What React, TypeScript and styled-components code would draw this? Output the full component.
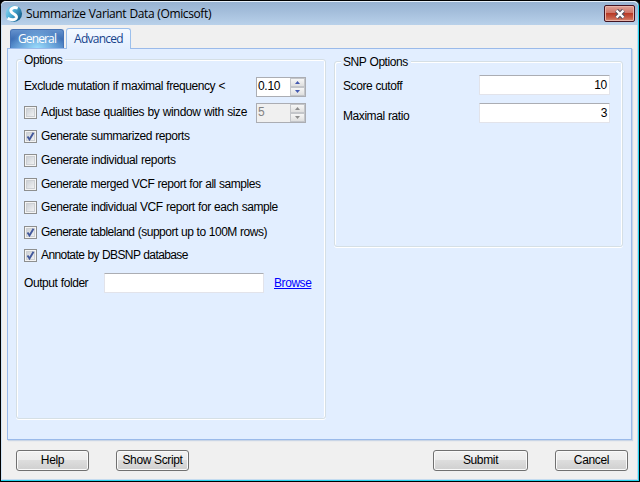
import React from "react";
import styled, { createGlobalStyle } from "styled-components";

const Global = createGlobalStyle`
  * { box-sizing: border-box; }
  body { margin: 0; background: #000; overflow: hidden; }
`;

const Window = styled.div`
  width: 640px;
  height: 482px;
  display: flex;
  flex-direction: column;
  border: 1px solid #000;
  border-radius: 6px 6px 0 0;
  background: #f0f0f0;
  box-shadow: inset -1px -1px 0 #27d3ee, inset 1px 0 0 #cfe4f7, inset -2px -2px 0 #c5dcf0;
  font: 12px/14px "Liberation Sans", Arial, sans-serif;
  letter-spacing: -0.43px;
  word-spacing: 0.4px;
  color: #000;
  white-space: nowrap;
`;

const TitleBar = styled.header`
  height: 24px;
  flex: none;
  display: flex;
  align-items: center;
  padding: 0 3px 0 4px;
  margin-right: 1px;
  border-radius: 5px 5px 0 0;
  border-top: 1px solid #e6f0fa;
  background: linear-gradient(#98b3d2, #a5bfdc 45%, #b9d1ea);
`;

const Title = styled.h1`
  margin: 0 auto 0 3px;
  font: 12px/18px "Open Sans", "Noto Sans", sans-serif;
  letter-spacing: -0.38px;
  word-spacing: 0.4px;
`;

const CloseButton = styled.button`
  width: 31px;
  height: 17px;
  padding: 0;
  display: flex;
  align-items: center;
  justify-content: center;
  border: 1px solid #431422;
  border-radius: 2px;
  box-shadow: inset 0 0 0 1px #e9b4a9;
  background: linear-gradient(#dfa298, #cf7567 46%, #b83a26 50%, #c8604b 80%, #d98a72);
`;

const Tabs = styled.nav`
  height: 23px;
  flex: none;
  display: flex;
  align-items: flex-end;
  gap: 2px;
  padding-left: 9px;
`;

const Tab = styled.div<{ $active?: boolean }>`
  width: ${(p) => (p.$active ? 65 : 54)}px;
  height: ${(p) => (p.$active ? 21 : 19)}px;
  margin-bottom: ${(p) => (p.$active ? -1 : 0)}px;
  padding-top: ${(p) => (p.$active ? 1 : 0)}px;
  position: relative;
  text-align: center;
  font: 12px/18px "Open Sans", "Noto Sans", sans-serif;
  letter-spacing: ${(p) => (p.$active ? -0.75 : -0.85)}px;
  border: 1px solid ${(p) => (p.$active ? "#9bbfec" : "#4673b5")};
  border-bottom: 0;
  border-radius: 3px 3px 0 0;
  color: ${(p) => (p.$active ? "#15428b" : "#fff")};
  background: ${(p) =>
    p.$active
      ? "linear-gradient(#f5faff, #e2eeff)"
      : "radial-gradient(ellipse at 50% 100%, #9adcfb 0, rgba(130,190,235,.6) 45%, transparent 75%), linear-gradient(#6391cd, #3e70b6 50%, #5189ca)"};
`;

const Panel = styled.main`
  width: 625px;
  height: 392px;
  flex: none;
  margin-left: 6px;
  display: flex;
  align-items: flex-start;
  gap: 8px;
  padding: 10px 0 0 8px;
  border: 1px solid #9abaea;
  background: #e2eeff;
  box-shadow: 1px 1px 1px #c9d5e6;
`;

const Group = styled.section<{ $w: number; $h: number; $top?: number; $inset?: number }>`
  width: ${(p) => p.$w}px;
  height: ${(p) => p.$h}px;
  margin-top: ${(p) => p.$top ?? 0}px;
  padding-left: ${(p) => p.$inset ?? 7}px;
  display: flex;
  flex-direction: column;
  align-items: flex-start;
  border: 1px solid #d5dfe5;
  border-radius: 3px;
  box-shadow: inset 1px 1px 0 #fff, inset -1px 0 0 #fff, 0 1px 0 #fff;
`;

const Legend = styled.h2`
  margin: -7px 0 0 -2px;
  height: 14px;
  padding: 0 3px 0 2px;
  background: #e2eeff;
  font: inherit;
`;

const Row = styled.div<{ $gap: number; $h?: number }>`
  height: ${(p) => p.$h ?? 20}px;
  margin-top: ${(p) => p.$gap}px;
  display: flex;
  align-items: center;
`;

const Caption = styled.span<{ $w: number; $drop?: number }>`
  width: ${(p) => p.$w}px;
  margin-top: ${(p) => p.$drop ?? 0}px;
`;

const CheckRow = styled.label<{ $gap: number }>`
  height: 13px;
  margin-top: ${(p) => p.$gap}px;
  display: flex;
  align-items: center;
`;

const Box = styled.span`
  width: 13px;
  height: 13px;
  display: flex;
  border: 1px solid #8e8f8f;
  background: linear-gradient(135deg, #c3c8cf, #fafafa);
  background-clip: content-box;
  padding: 2px;
  box-shadow: inset 0 0 0 1px #f4f4f4, inset 0 0 0 2px #cdd0d4;
`;

const CheckMark = styled.svg`
  width: 9px;
  height: 9px;
  margin: -1px;
  overflow: visible;
  flex: none;
`;

const CheckText = styled.span<{ $w?: number; $track?: number }>`
  margin: -2px 0 0 4px;
  width: ${(p) => (p.$w ? p.$w + "px" : "auto")};
  letter-spacing: ${(p) => (p.$track === undefined ? "inherit" : p.$track + "px")};
`;

const Field = styled.div<{ $w: number }>`
  width: ${(p) => p.$w}px;
  height: 20px;
  padding: 2px 2px 0;
  text-align: right;
  font-size: 12px;
  letter-spacing: -0.3px;
  border: 1px solid #e2e3ea;
  border-top-color: #abadb3;
  border-radius: 1px;
  background: #fff;
`;

const SpinField = styled.div<{ $off?: boolean }>`
  width: 50px;
  height: 20px;
  display: flex;
  justify-content: space-between;
  padding-left: 1px;
  font-size: 12px;
  line-height: 17px;
  letter-spacing: -0.3px;
  border: 1px solid #abadb3;
  background: ${(p) => (p.$off ? "#f0f0f0" : "#fff")};
  color: ${(p) => (p.$off ? "#838383" : "#000")};
`;

const Steps = styled.div`
  width: 15px;
  height: 18px;
  display: flex;
  flex-direction: column;
`;

const Step = styled.span`
  height: 9px;
  display: flex;
  align-items: center;
  justify-content: center;
  border: 1px solid #c4c6ca;
  background: linear-gradient(#f6f6f6, #dfdfdf);
`;

const Link = styled.a`
  margin-left: 10px;
  color: #00f;
  text-decoration: underline;
`;

const Footer = styled.footer`
  display: flex;
  padding: 10px 11px 0 15px;
`;

const Button = styled.button<{ $w: number; $left?: number }>`
  width: ${(p) => p.$w}px;
  height: 21px;
  margin-left: ${(p) => p.$left ?? 0}px;
  padding: 0 0 2px;
  flex: none;
  font: inherit;
  letter-spacing: -0.35px;
  color: #000;
  border: 1px solid #707070;
  border-radius: 3px;
  box-shadow: inset 0 0 0 1px #fafafa;
  background: linear-gradient(#f2f2f2, #ebebeb 49%, #dddddd 50%, #cfcfcf);
`;

const Logo = () => (
  <svg width="18" height="18" viewBox="0 0 17 17">
    <defs>
      <linearGradient id="logo" x1="0" y1="0" x2="1" y2="0.6">
        <stop offset="0" stopColor="#9bd9f2" />
        <stop offset="0.5" stopColor="#4baed6" />
        <stop offset="1" stopColor="#17618f" />
      </linearGradient>
    </defs>
    <circle cx="8.3" cy="8.2" r="7.800" fill="url(#logo)" />
    <path d="M12 3C8 1.500 4.500 3.500 5.800 6.300C7 8.800 11.300 8.800 10.800 11.800C10.300 14.300 6 14.500 2.500 12.500" fill="none" stroke="#fff" strokeWidth="2.800" />
  </svg>
);

const Arrow = ({ down, off }: { down?: boolean; off?: boolean }) => (
  <svg width="5" height="3" viewBox="0 0 5 3">
    <path d={down ? "M0 0H5L2.500 3Z" : "M0 3H5L2.500 0Z"} fill={off ? "#8d8d8d" : "#4359b0"} />
  </svg>
);

const Spinner = ({ value, off }: { value: string; off?: boolean }) => (
  <SpinField $off={off}>
    {value}
    <Steps>
      <Step><Arrow off={off} /></Step>
      <Step><Arrow down off={off} /></Step>
    </Steps>
  </SpinField>
);

type CheckProps = {
  on?: boolean;
  gap: number;
  text: string;
  w?: number;
  track?: number;
  children?: React.ReactNode;
};

const Check = ({ on, gap, text, w, track, children }: CheckProps) => (
  <CheckRow $gap={gap}>
    <Box>
      {on && (
        <CheckMark viewBox="0 0 9 9">
          <path d="M1.500 4.500L3.500 7.500L7.500 0.800" fill="none" stroke="#42589c" strokeWidth="1.900" />
        </CheckMark>
      )}
    </Box>
    <CheckText $w={w} $track={track}>{text}</CheckText>
    {children}
  </CheckRow>
);

export default function App() {
  return (
    <>
      <Global />
      <Window>
        <TitleBar>
          <Logo />
          <Title>Summarize Variant Data (Omicsoft)</Title>
          <CloseButton aria-label="Close">
            <svg width="12" height="10" viewBox="0 0 12 10">
              <path d="M2.500 1.500L9.500 8.500M9.500 1.500L2.500 8.500" stroke="#53525f" strokeWidth="4.400" />
              <path d="M2.500 1.500L9.500 8.500M9.500 1.500L2.500 8.500" stroke="#fff" strokeWidth="2.400" />
            </svg>
          </CloseButton>
        </TitleBar>
        <Tabs>
          <Tab>General</Tab>
          <Tab $active>Advanced</Tab>
        </Tabs>
        <Panel>
          <Group $w={310} $h={360}>
            <Legend>Options</Legend>
            <Row $gap={10}>
              <Caption $w={232} $drop={-2}>Exclude mutation if maximal frequency &lt;</Caption>
              <Spinner value="0.10" />
            </Row>
            <Check gap={9} text="Adjust base qualities by window with size" w={215} track={-0.37}>
              <Spinner value="5" off />
            </Check>
            <Check on gap={11} text="Generate summarized reports" />
            <Check gap={11} text="Generate individual reports" track={-0.38} />
            <Check gap={11} text="Generate merged VCF report for all samples" track={-0.47} />
            <Check gap={10} text="Generate individual VCF report for each sample" />
            <Check on gap={12} text="Generate tableland (support up to 100M rows)" track={-0.5} />
            <Check on gap={10} text="Annotate by DBSNP database" track={-0.6} />
            <Row $gap={11}>
              <Caption $w={80}>Output folder</Caption>
              <Field $w={160} />
              <Link>Browse</Link>
            </Row>
          </Group>
          <Group $w={289} $h={186} $top={2} $inset={8}>
            <Legend>SNP Options</Legend>
            <Row $gap={6}>
              <Caption $w={136} $drop={2}>Score cutoff</Caption>
              <Field $w={131}>10</Field>
            </Row>
            <Row $gap={8}>
              <Caption $w={136} $drop={6}>Maximal ratio</Caption>
              <Field $w={131}>3</Field>
            </Row>
          </Group>
        </Panel>
        <Footer>
          <Button $w={73}>Help</Button>
          <Button $w={73} $left={27}>Show Script</Button>
          <Button $w={95} $left={244}>Submit</Button>
          <Button $w={73} $left={27}>Cancel</Button>
        </Footer>
      </Window>
    </>
  );
}
